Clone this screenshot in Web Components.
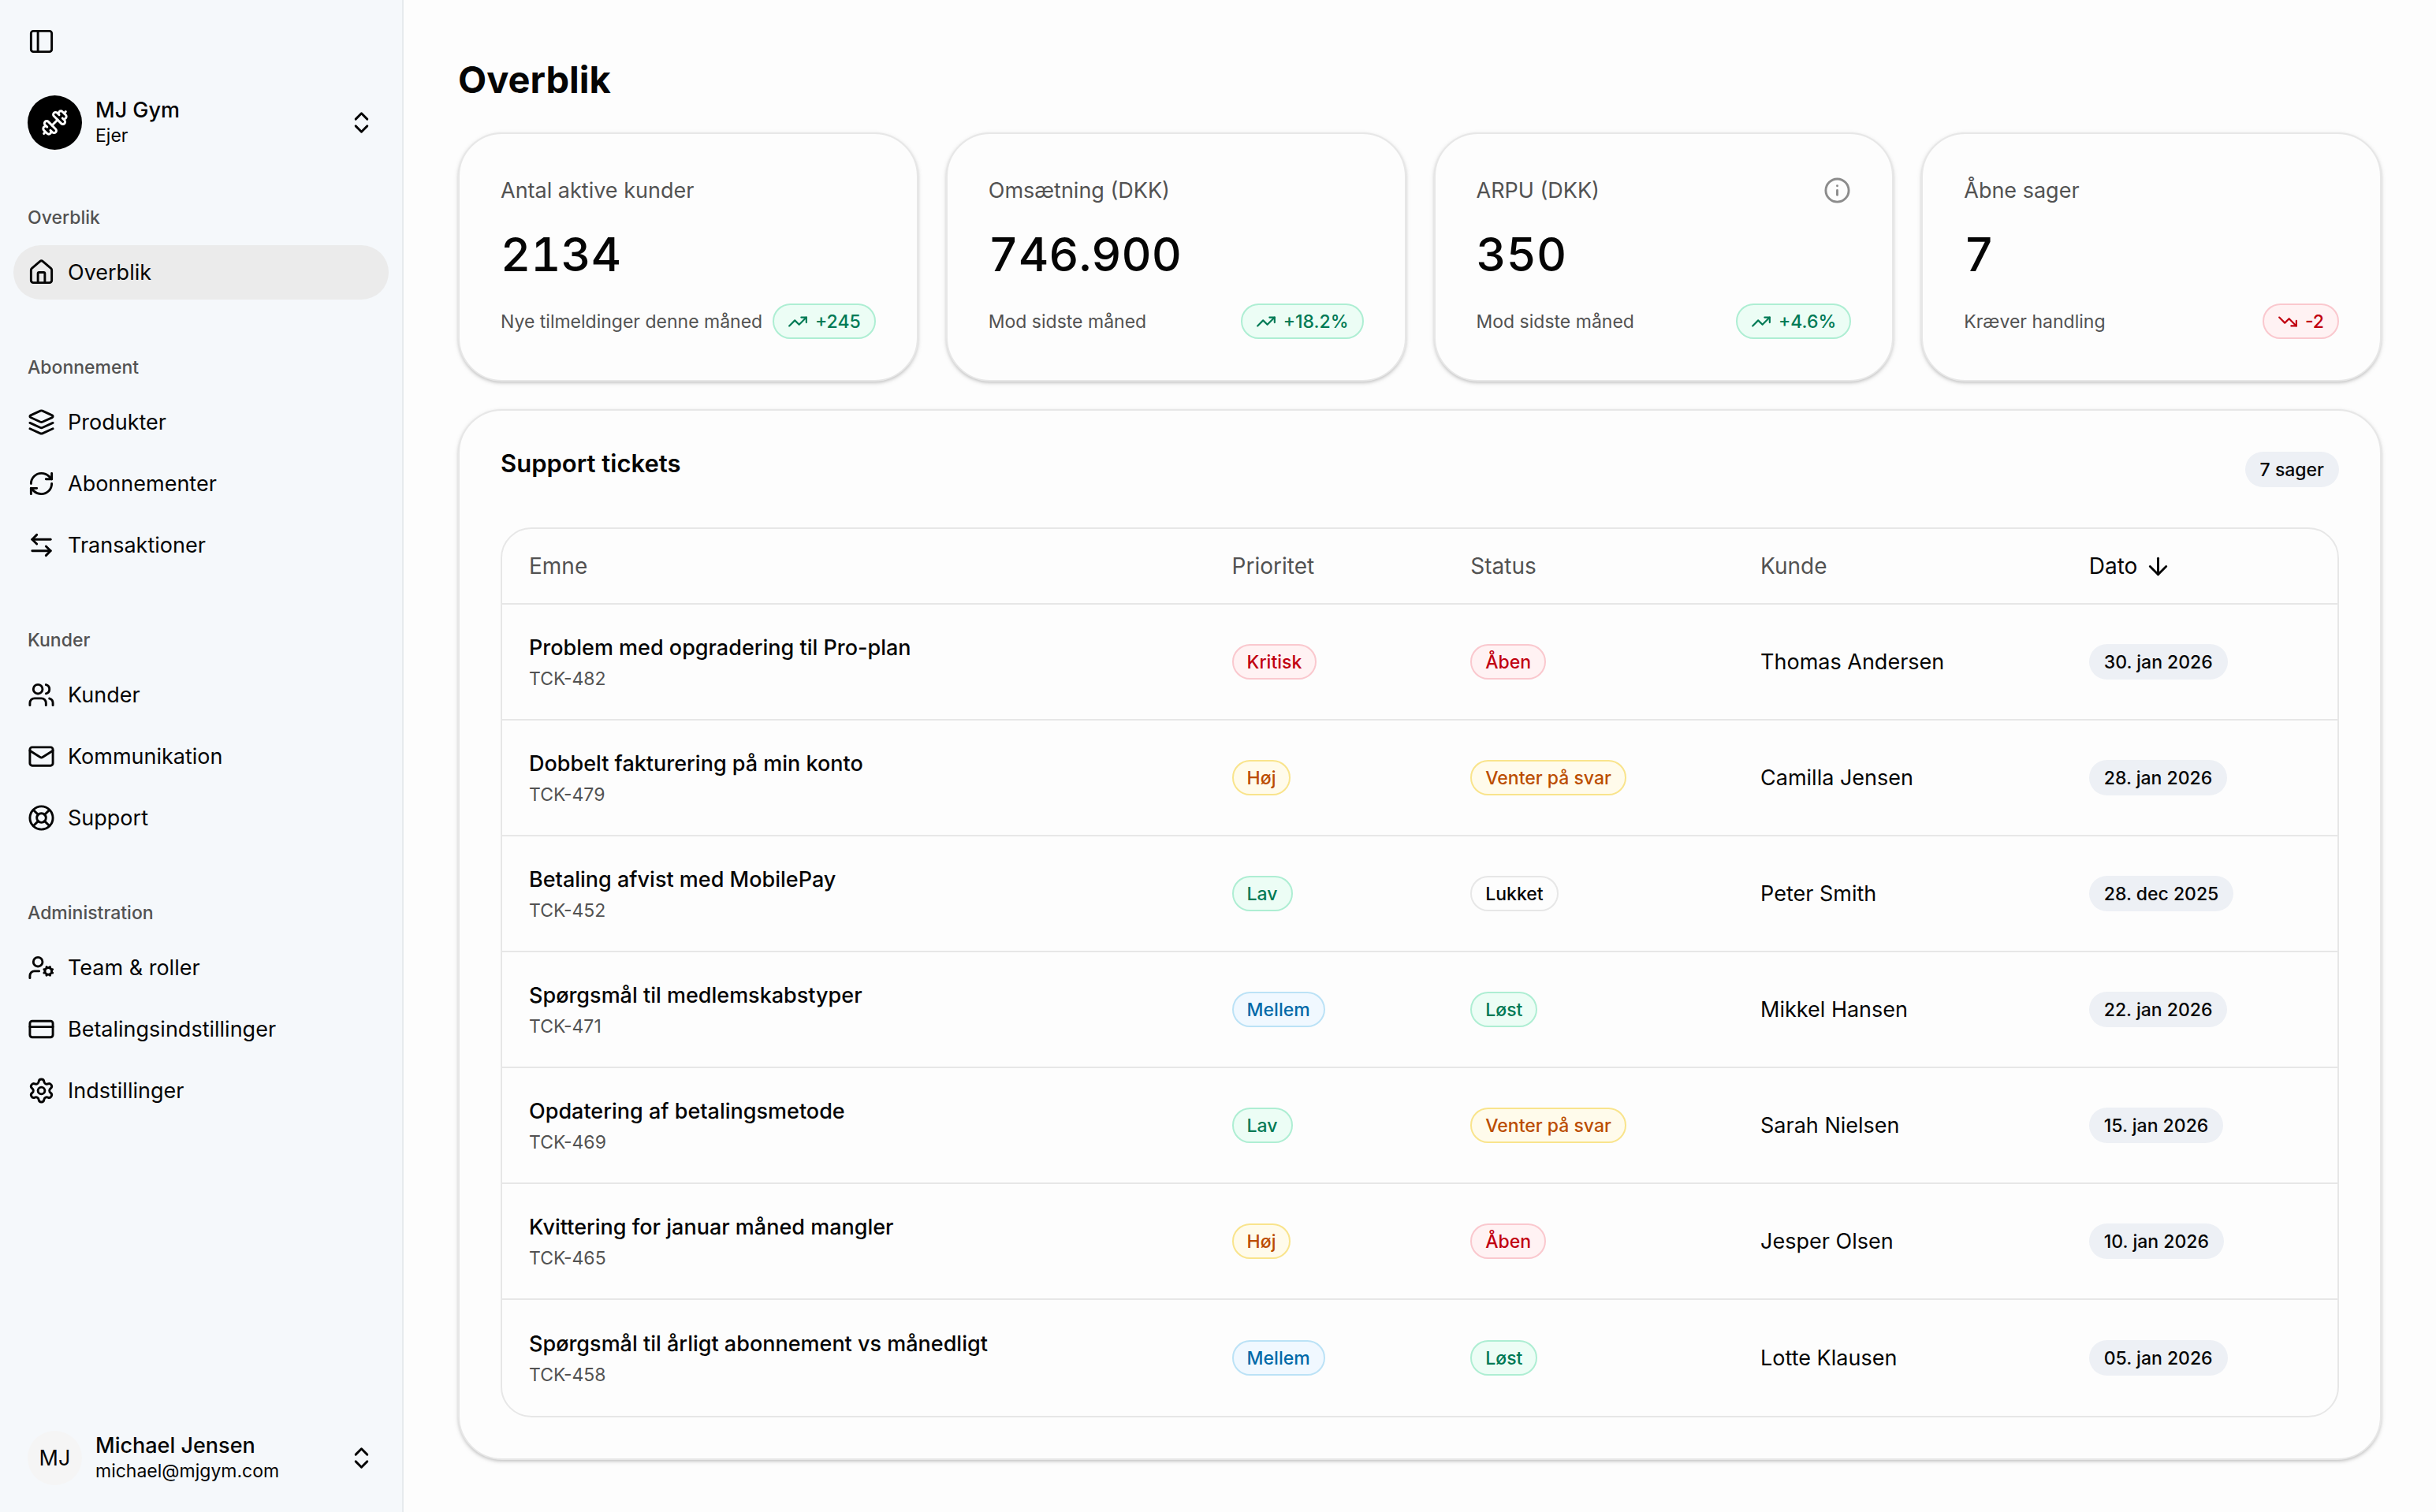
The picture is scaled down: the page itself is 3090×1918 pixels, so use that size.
<!DOCTYPE html>
<html lang="da">
<head>
<meta charset="utf-8">
<meta name="viewport" content="width=device-width, initial-scale=1">
<title>Overblik – MJ Gym</title>
<style>
  :root {
    --fg: #050505;
    --muted: #525252;
    --line: #e7e7e7;
    --surface: #fdfdfd;
    --sidebar: #f5f8fb;
    --text-xs: 23px;
    --text-sm: 27px;
    --icon: 35px;
  }
  body {
    margin: 0;
    background: var(--surface);
    color: var(--fg);
    font-family: Inter, "Liberation Sans", sans-serif;
    font-size: var(--text-sm);
  }
</style>
</head>
<body>
<app-shell>
  <app-sidebar slot="sidebar">
    <account-button slot="brand" name="MJ Gym" detail="Ejer" icon="dumbbell"></account-button>
    <nav-group label="Overblik">
      <nav-item icon="house" current>Overblik</nav-item>
    </nav-group>
    <nav-group label="Abonnement">
      <nav-item icon="layers">Produkter</nav-item>
      <nav-item icon="refresh">Abonnementer</nav-item>
      <nav-item icon="transfer">Transaktioner</nav-item>
    </nav-group>
    <nav-group label="Kunder">
      <nav-item icon="users">Kunder</nav-item>
      <nav-item icon="mail">Kommunikation</nav-item>
      <nav-item icon="buoy">Support</nav-item>
    </nav-group>
    <nav-group label="Administration">
      <nav-item icon="usercog">Team &amp; roller</nav-item>
      <nav-item icon="card">Betalingsindstillinger</nav-item>
      <nav-item icon="settings">Indstillinger</nav-item>
    </nav-group>
    <account-button slot="user" name="Michael Jensen" detail="michael@mjgym.com" initials="MJ"></account-button>
  </app-sidebar>

  <page-title>Overblik</page-title>
  <stat-grid>
    <stat-card label="Antal aktive kunder" value="2134" note="Nye tilmeldinger denne måned">
      <status-badge tone="green" icon="up">+245</status-badge>
    </stat-card>
    <stat-card label="Omsætning (DKK)" value="746.900" note="Mod sidste måned">
      <status-badge tone="green" icon="up">+18.2%</status-badge>
    </stat-card>
    <stat-card label="ARPU (DKK)" value="350" note="Mod sidste måned" info>
      <status-badge tone="green" icon="up">+4.6%</status-badge>
    </stat-card>
    <stat-card label="Åbne sager" value="7" note="Kræver handling">
      <status-badge tone="red" icon="down">-2</status-badge>
    </stat-card>
  </stat-grid>
  <panel-card heading="Support tickets">
    <status-badge slot="aside" tone="gray">7 sager</status-badge>
    <ticket-table></ticket-table>
  </panel-card>
</app-shell>

<script>
const ICONS = {
  panel: '<rect width="18" height="18" x="3" y="3" rx="2"/><path d="M9 3v18"/>',
  dumbbell: '<path d="M17.596 12.768a2 2 0 1 0 2.829-2.829l-1.768-1.767a2 2 0 0 0 2.828-2.829l-2.828-2.828a2 2 0 0 0-2.829 2.828l-1.767-1.768a2 2 0 1 0-2.829 2.829z"/><path d="m2.5 21.5 1.4-1.4"/><path d="m20.1 3.9 1.4-1.4"/><path d="M5.343 21.485a2 2 0 1 0 2.829-2.828l1.767 1.768a2 2 0 1 0 2.829-2.829l-6.364-6.364a2 2 0 1 0-2.829 2.829l1.768 1.767a2 2 0 0 0-2.828 2.829z"/><path d="m9.6 14.4 4.8-4.8"/>',
  chevrons: '<path d="m7 15 5 5 5-5"/><path d="m7 9 5-5 5 5"/>',
  house: '<path d="M15 21v-8a1 1 0 0 0-1-1h-4a1 1 0 0 0-1 1v8"/><path d="M3 10a2 2 0 0 1 .709-1.528l7-5.999a2 2 0 0 1 2.582 0l7 5.999A2 2 0 0 1 21 10v9a2 2 0 0 1-2 2H5a2 2 0 0 1-2-2z"/>',
  layers: '<path d="m12.83 2.18a2 2 0 0 0-1.66 0L2.6 6.08a1 1 0 0 0 0 1.83l8.58 3.91a2 2 0 0 0 1.66 0l8.58-3.9a1 1 0 0 0 0-1.83Z"/><path d="m22 17.65-9.17 4.16a2 2 0 0 1-1.66 0L2 17.65"/><path d="m22 12.65-9.17 4.16a2 2 0 0 1-1.66 0L2 12.65"/>',
  refresh: '<path d="M3 12a9 9 0 0 1 9-9 9.75 9.75 0 0 1 6.74 2.74L21 8"/><path d="M21 3v5h-5"/><path d="M21 12a9 9 0 0 1-9 9 9.75 9.75 0 0 1-6.74-2.74L3 16"/><path d="M8 16H3v5"/>',
  transfer: '<path d="M8 3 4 7l4 4"/><path d="M4 7h16"/><path d="m16 21 4-4-4-4"/><path d="M20 17H4"/>',
  users: '<path d="M16 21v-2a4 4 0 0 0-4-4H6a4 4 0 0 0-4 4v2"/><circle cx="9" cy="7" r="4"/><path d="M22 21v-2a4 4 0 0 0-3-3.87"/><path d="M16 3.13a4 4 0 0 1 0 7.75"/>',
  mail: '<rect width="20" height="16" x="2" y="4" rx="2"/><path d="m22 7-8.97 5.7a1.94 1.94 0 0 1-2.06 0L2 7"/>',
  buoy: '<circle cx="12" cy="12" r="10"/><path d="m4.93 4.93 4.24 4.24"/><path d="m14.83 9.17 4.24-4.24"/><path d="m14.83 14.83 4.24 4.24"/><path d="m9.17 14.83-4.24 4.24"/><circle cx="12" cy="12" r="4"/>',
  usercog: '<path d="M10 15H6a4 4 0 0 0-4 4v2"/><circle cx="9" cy="7" r="4"/><circle cx="18" cy="15" r="3"/><path d="m14.305 16.53.923-.382"/><path d="m15.228 13.852-.923-.383"/><path d="m16.852 12.228-.383-.923"/><path d="m16.852 17.772-.383.924"/><path d="m19.148 12.228.383-.923"/><path d="m19.53 18.696-.382-.924"/><path d="m20.772 13.852.924-.383"/><path d="m20.772 16.148.924.383"/>',
  card: '<rect width="20" height="14" x="2" y="5" rx="2"/><path d="M2 10h20"/>',
  settings: '<path d="M9.671 4.136a2.34 2.34 0 0 1 4.659 0 2.34 2.34 0 0 0 3.319 1.915 2.34 2.34 0 0 1 2.33 4.033 2.34 2.34 0 0 0 0 3.831 2.34 2.34 0 0 1-2.33 4.033 2.34 2.34 0 0 0-3.319 1.915 2.34 2.34 0 0 1-4.659 0 2.34 2.34 0 0 0-3.32-1.915 2.34 2.34 0 0 1-2.33-4.033 2.34 2.34 0 0 0 0-3.831A2.34 2.34 0 0 1 6.35 6.051a2.34 2.34 0 0 0 3.319-1.915"/><circle cx="12" cy="12" r="3"/>',
  up: '<path d="M16 7h6v6"/><path d="m22 7-8.5 8.5-5-5L2 17"/>',
  down: '<path d="M16 17h6v-6"/><path d="m22 17-8.5-8.5-5 5L2 7"/>',
  info: '<circle cx="12" cy="12" r="10"/><path d="M12 16v-4"/><path d="M12 8h.01"/>',
  arrow: '<path d="M12 5v14"/><path d="m19 12-7 7-7-7"/>'
};

const RESET = `
  *, *::before, *::after { box-sizing: border-box; }
  button { font: inherit; color: inherit; background: none; border: 0; padding: 0; margin: 0; text-align: left; cursor: pointer; }
  h1, h2, p { margin: 0; font-size: inherit; font-weight: inherit; }
`;

class Base extends HTMLElement {
  constructor() {
    super();
    this.attachShadow({ mode: 'open' });
  }
  connectedCallback() {
    this.shadowRoot.innerHTML = `<style>${RESET}${this.css()}</style>${this.html()}`;
  }
  attr(name) { return this.getAttribute(name) || ''; }
}

customElements.define('ui-icon', class extends Base {
  css() {
    return `:host { display: block; flex: none; width: var(--icon-size, var(--icon)); height: var(--icon-size, var(--icon)); }
      svg { display: block; width: 100%; height: 100%; fill: none; stroke: currentColor; stroke-width: 2; stroke-linecap: round; stroke-linejoin: round; }`;
  }
  html() { return `<svg viewBox="0 0 24 24" aria-hidden="true">${ICONS[this.attr('name')]}</svg>`; }
});

customElements.define('app-shell', class extends Base {
  css() {
    return `:host { display: flex; align-items: flex-start; min-height: 100vh; }
      main { flex: 1; min-width: 0; padding: 69px 69px 52px; display: flex; flex-direction: column; gap: 35px; }`;
  }
  html() { return `<slot name="sidebar"></slot><main><slot></slot></main>`; }
});

customElements.define('app-sidebar', class extends Base {
  css() {
    return `:host { box-sizing: border-box; flex: none; position: sticky; top: 0; width: 512px; height: 100vh; padding: 35px 17px 34px;
        background: var(--sidebar); border-right: 2px solid #e6eaed; display: flex; flex-direction: column; }
      .toggle { margin: 0 18px 51px; align-self: flex-start; }
      nav { flex: 1; display: flex; flex-direction: column; gap: 52px; padding-top: 52px; }`;
  }
  html() {
    return `<button class="toggle" type="button" aria-label="Skjul sidepanel"><ui-icon name="panel"></ui-icon></button>
      <slot name="brand"></slot><nav><slot></slot></nav><slot name="user"></slot>`;
  }
});

customElements.define('account-button', class extends Base {
  css() {
    return `:host { display: block; }
      button { display: flex; align-items: center; gap: 17px; width: 100%; padding: 0 17px 0 18px; }
      .avatar { flex: none; width: 69px; height: 69px; border-radius: 50%; display: grid; place-items: center; background: #f5f5f5; }
      .avatar.dark { background: #000; color: #fff; }
      .text { flex: 1; min-width: 0; display: flex; flex-direction: column; line-height: 33px; }
      .name { font-weight: 500; }
      .detail { font-size: var(--text-xs); }`;
  }
  html() {
    const icon = this.attr('icon');
    return `<button type="button">
      <span class="avatar ${icon ? 'dark' : ''}">${icon ? `<ui-icon name="${icon}"></ui-icon>` : this.attr('initials')}</span>
      <span class="text"><span class="name">${this.attr('name')}</span><span class="detail">${this.attr('detail')}</span></span>
      <ui-icon name="chevrons"></ui-icon></button>`;
  }
});

customElements.define('nav-group', class extends Base {
  css() {
    return `:host { display: block; }
      h2 { padding-left: 18px; line-height: 69px; font-size: var(--text-xs); font-weight: 500; color: var(--muted); }
      .items { display: flex; flex-direction: column; gap: 9px; }`;
  }
  html() { return `<h2>${this.attr('label')}</h2><div class="items"><slot></slot></div>`; }
});

customElements.define('nav-item', class extends Base {
  css() {
    return `:host { display: block; }
      a { display: flex; align-items: center; gap: 16px; height: 69px; padding: 0 18px; border-radius: 35px; color: inherit; text-decoration: none; }
      a[aria-current] { background: #ebebeb; }`;
  }
  html() {
    return `<a href="#" ${this.hasAttribute('current') ? 'aria-current="page"' : ''}><ui-icon name="${this.attr('icon')}"></ui-icon><span><slot></slot></span></a>`;
  }
});

customElements.define('page-title', class extends Base {
  css() { return `:host { display: block; } h1 { font-size: 47px; line-height: 64px; font-weight: 700; }`; }
  html() { return `<h1><slot></slot></h1>`; }
});

customElements.define('stat-grid', class extends Base {
  css() { return `:host { display: grid; grid-template-columns: repeat(4, minmax(0, 1fr)); gap: 35px; }`; }
  html() { return `<slot></slot>`; }
});

const CARD = `box-sizing: border-box; padding: 52px; border: 2px solid var(--line); border-radius: 56px; background: var(--surface);
  box-shadow: 0 2px 6px rgba(0, 0, 0, .1), 0 2px 4px -1px rgba(0, 0, 0, .2);`;

customElements.define('stat-card', class extends Base {
  css() {
    return `:host { ${CARD} display: flex; flex-direction: column; gap: 17px; }
      .top, .foot { display: flex; align-items: center; justify-content: space-between; color: var(--muted); }
      .top { height: 38px; }
      .top button { color: #8c8c8c; }
      .value { font-size: 59px; line-height: 91px; font-weight: 500; font-variant-numeric: tabular-nums; }
      .note { font-size: var(--text-xs); }`;
  }
  html() {
    return `<div class="top"><h2>${this.attr('label')}</h2>${this.hasAttribute('info') ? '<button type="button" aria-label="Om ARPU"><ui-icon name="info"></ui-icon></button>' : ''}</div>
      <p class="value">${this.attr('value')}</p>
      <div class="foot"><p class="note">${this.attr('note')}</p><slot></slot></div>`;
  }
});

customElements.define('status-badge', class extends Base {
  css() {
    return `:host { box-sizing: border-box; display: inline-flex; align-items: center; gap: 9px; height: 45px; padding: 0 17px; vertical-align: middle;
        border: 2px solid var(--line); border-radius: 23px; font-size: var(--text-xs); font-weight: 500; white-space: nowrap; color: var(--fg); --icon-size: 26px; }
      :host([tone="green"]) { color: #007a55; background: #ecfdf5; border-color: #aeeed3; }
      :host([tone="red"]) { color: #c10010; background: #fff2f3; border-color: #fac8ce; }
      :host([tone="amber"]) { color: #bb4d00; background: #fffbeb; border-color: #f9e48c; }
      :host([tone="blue"]) { color: #0069a8; background: #f0f8ff; border-color: #bbe2f6; }
      :host([tone="gray"]) { background: #edf0f5; border-color: transparent; }`;
  }
  html() { return `${this.attr('icon') ? `<ui-icon name="${this.attr('icon')}"></ui-icon>` : ''}<slot></slot>`; }
});

customElements.define('panel-card', class extends Base {
  css() {
    return `:host { ${CARD} display: block; }
      header { display: flex; align-items: flex-start; justify-content: space-between; margin-bottom: 51px; }
      h2 { font-size: 31px; line-height: 30px; font-weight: 600; }`;
  }
  html() { return `<header><h2>${this.attr('heading')}</h2><slot name="aside"></slot></header><slot></slot>`; }
});

const PRIORITY = { Kritisk: 'red', 'Høj': 'amber', Lav: 'green', Mellem: 'blue' };
const STATUS = { 'Åben': 'red', 'Venter på svar': 'amber', Lukket: 'plain', 'Løst': 'green' };
const TICKETS = [
  ['Problem med opgradering til Pro-plan', 'TCK-482', 'Kritisk', 'Åben', 'Thomas Andersen', '30. jan 2026'],
  ['Dobbelt fakturering på min konto', 'TCK-479', 'Høj', 'Venter på svar', 'Camilla Jensen', '28. jan 2026'],
  ['Betaling afvist med MobilePay', 'TCK-452', 'Lav', 'Lukket', 'Peter Smith', '28. dec 2025'],
  ['Spørgsmål til medlemskabstyper', 'TCK-471', 'Mellem', 'Løst', 'Mikkel Hansen', '22. jan 2026'],
  ['Opdatering af betalingsmetode', 'TCK-469', 'Lav', 'Venter på svar', 'Sarah Nielsen', '15. jan 2026'],
  ['Kvittering for januar måned mangler', 'TCK-465', 'Høj', 'Åben', 'Jesper Olsen', '10. jan 2026'],
  ['Spørgsmål til årligt abonnement vs månedligt', 'TCK-458', 'Mellem', 'Løst', 'Lotte Klausen', '05. jan 2026']
];

customElements.define('ticket-table', class extends Base {
  css() {
    return `:host { display: block; border: 2px solid var(--line); border-radius: 39px; overflow: hidden; }
      table { width: 100%; table-layout: fixed; border-collapse: separate; border-spacing: 0; font-size: var(--text-sm); }
      .subject { width: 38.3%; } .priority { width: 13%; } .status { width: 15.8%; } .customer { width: 17.9%; }
      th { height: 96px; padding: 0 0 0 34px; font-size: 28px; font-weight: 400; text-align: left; color: var(--muted); border-bottom: 2px solid var(--line); }
      th[aria-sort] { color: var(--fg); }
      th button { display: flex; align-items: center; gap: 9px; }
      td { height: 147px; padding: 0 0 0 34px; vertical-align: middle; border-bottom: 2px solid var(--line); }
      tr:last-child td { border-bottom: 0; }
      .title { font-weight: 500; line-height: 43px; }
      .id { font-size: var(--text-xs); line-height: 36px; color: var(--muted); }`;
  }
  html() {
    return `<table>
      <colgroup><col class="subject"><col class="priority"><col class="status"><col class="customer"><col></colgroup>
      <thead><tr><th scope="col">Emne</th><th scope="col">Prioritet</th><th scope="col">Status</th><th scope="col">Kunde</th>
      <th scope="col" aria-sort="descending"><button type="button">Dato<ui-icon name="arrow"></ui-icon></button></th></tr></thead>
      <tbody>${TICKETS.map(([title, id, priority, status, customer, date]) => `<tr>
        <td><p class="title">${title}</p><p class="id">${id}</p></td>
        <td><status-badge tone="${PRIORITY[priority]}">${priority}</status-badge></td>
        <td><status-badge tone="${STATUS[status]}">${status}</status-badge></td>
        <td>${customer}</td>
        <td><status-badge tone="gray">${date}</status-badge></td></tr>`).join('')}</tbody></table>`;
  }
});
</script>
</body>
</html>
